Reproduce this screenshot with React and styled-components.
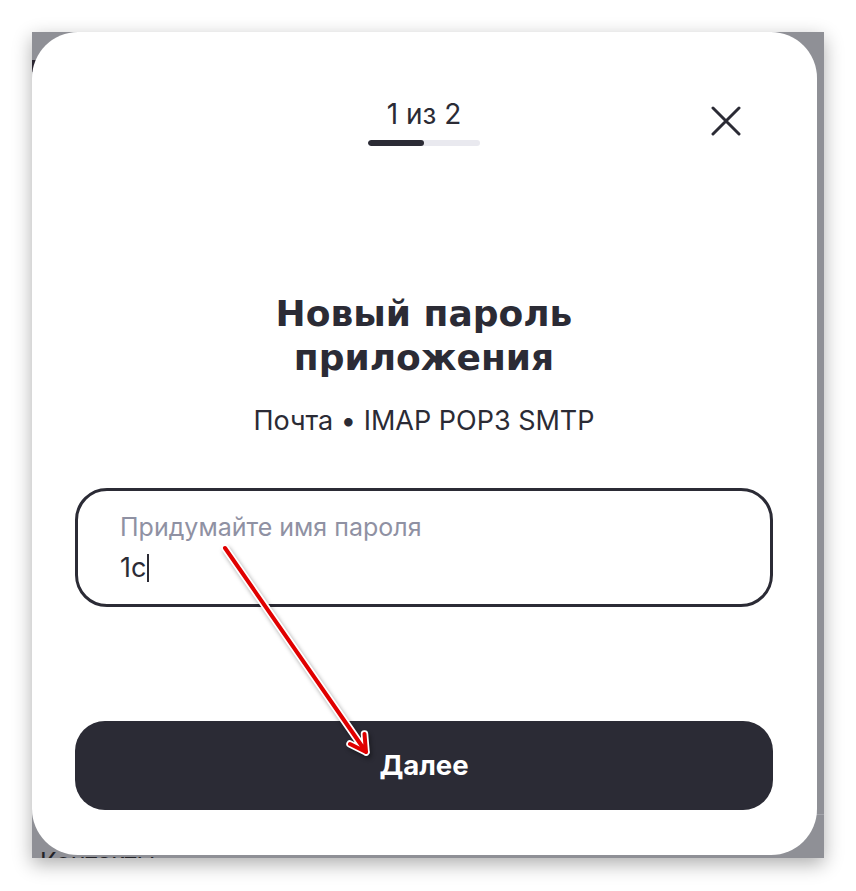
import React from "react";
import styled, { createGlobalStyle } from "styled-components";

const Global = createGlobalStyle`
  html, body { margin: 0; padding: 0; background: #ffffff; }
  body { font-family: Inter, "Noto Sans", sans-serif; color: #2b2b35; }
  * { box-sizing: border-box; }
`;

const Page = styled.div`
  position: relative;
  width: 856px;
  height: 891px;
  padding: 32px 0 0 32px;
  background: #ffffff;
`;

const Frame = styled.div`
  position: relative;
  width: 792px;
  height: 826px;
  background: #8f9096;
  box-shadow: 0 6px 18px rgba(0, 0, 0, 0.32);
  overflow: hidden;
`;

const BehindText = styled.div`
  position: absolute;
  left: 8px;
  top: 815px;
  font-family: Inter, "Noto Sans", sans-serif;
  font-size: 25px;
  color: #232328;
  z-index: 0;
`;

const BehindChip = styled.div`
  position: absolute;
  left: 0;
  top: 28px;
  width: 4px;
  height: 12px;
  background: #2a2530;
  z-index: 0;
`;

const BehindLine = styled.div`
  position: absolute;
  right: 0;
  top: 782px;
  width: 8px;
  height: 1px;
  background: #a3a4aa;
  z-index: 0;
`;

const Modal = styled.div`
  position: relative;
  z-index: 1;
  width: 785px;
  height: 823px;
  background: #ffffff;
  border-radius: 46px;
  display: flex;
  flex-direction: column;
  padding: 66px 44px 45px 43px;
`;

const Header = styled.div`
  display: grid;
  grid-template-columns: 1fr auto 1fr;
  align-items: start;
`;

const Step = styled.div`
  grid-column: 2;
  display: flex;
  flex-direction: column;
  align-items: center;
`;

const StepText = styled.div`
  font-size: 28px;
  line-height: 32px;
  color: #2b2b35;
  white-space: nowrap;
`;

const Progress = styled.div`
  margin-top: 10px;
  width: 112px;
  height: 6px;
  border-radius: 3px;
  background: #e9e9ef;
  overflow: hidden;
`;

const ProgressFill = styled.div`
  height: 100%;
  border-radius: 3px;
  background: #2b2b35;
`;

const Close = styled.button`
  grid-column: 3;
  justify-self: end;
  margin: 1px 25px 0 0;
  width: 44px;
  height: 44px;
  padding: 0;
  border: none;
  background: transparent;
  display: flex;
  align-items: center;
  justify-content: center;
  cursor: pointer;
`;

const Title = styled.h1`
  margin: 146px 0 0;
  font-family: "DejaVu Sans", Inter, sans-serif;
  font-size: 36px;
  line-height: 44px;
  font-weight: 700;
  text-align: center;
  color: #2b2b35;
`;

const Subtitle = styled.div`
  margin-top: 25px;
  font-size: 27px;
  line-height: 32px;
  text-align: center;
  color: #2b2b35;
`;

const Field = styled.div`
  margin-top: 51px;
  height: 119px;
  border: 3px solid #2b2b35;
  border-radius: 32px;
  padding: 22px 40px 0 42px;
  display: flex;
  flex-direction: column;
`;

const Label = styled.div`
  font-size: 25px;
  line-height: 28px;
  color: #8f91a3;
`;

const Value = styled.div`
  margin-top: 11px;
  font-size: 27px;
  line-height: 32px;
  color: #2b2b35;
  display: flex;
  align-items: center;
`;

const Caret = styled.span`
  display: inline-block;
  width: 2px;
  height: 28px;
  margin-left: 1px;
  background: #2b2b35;
`;

const Button = styled.button`
  margin-top: auto;
  height: 89px;
  width: 100%;
  border: none;
  border-radius: 30px;
  background: #2b2b35;
  color: #ffffff;
  font-family: Inter, "Noto Sans", sans-serif;
  font-size: 27.5px;
  font-weight: 700;
  padding: 0 0 2px;
  cursor: pointer;
`;

const Annotation = styled.svg`
  position: absolute;
  left: 0;
  top: 0;
  width: 856px;
  height: 891px;
  pointer-events: none;
  z-index: 5;
  filter: drop-shadow(2px 3px 2px rgba(0, 0, 0, 0.35));
`;

export default function App() {
  const arrow = "M225 548 L366 752 M350 744 L366 752 L364.5 734";
  return (
    <>
      <Global />
      <Page>
        <Frame>
          <BehindChip />
          <BehindLine />
          <BehindText>Контакты</BehindText>
          <Modal>
            <Header>
              <Step>
                <StepText>1 из 2</StepText>
                <Progress>
                  <ProgressFill style={{ width: "50%" }} />
                </Progress>
              </Step>
              <Close aria-label="Закрыть">
                <svg width="30" height="30" viewBox="0 0 30 30">
                  <path
                    d="M2 2 L28 28 M28 2 L2 28"
                    stroke="#2b2b35"
                    strokeWidth="3"
                    strokeLinecap="round"
                    fill="none"
                  />
                </svg>
              </Close>
            </Header>
            <Title>
              Новый пароль
              <br />
              приложения
            </Title>
            <Subtitle>Почта • IMAP POP3 SMTP</Subtitle>
            <Field>
              <Label>Придумайте имя пароля</Label>
              <Value>
                1c
                <Caret />
              </Value>
            </Field>
            <Button>Далее</Button>
          </Modal>
        </Frame>
        <Annotation viewBox="0 0 856 891">
          <path
            d={arrow}
            stroke="#ffffff"
            strokeWidth="7.5"
            strokeLinecap="round"
            strokeLinejoin="round"
            fill="none"
          />
          <path
            d={arrow}
            stroke="#e00000"
            strokeWidth="4"
            strokeLinecap="round"
            strokeLinejoin="round"
            fill="none"
          />
        </Annotation>
      </Page>
    </>
  );
}
